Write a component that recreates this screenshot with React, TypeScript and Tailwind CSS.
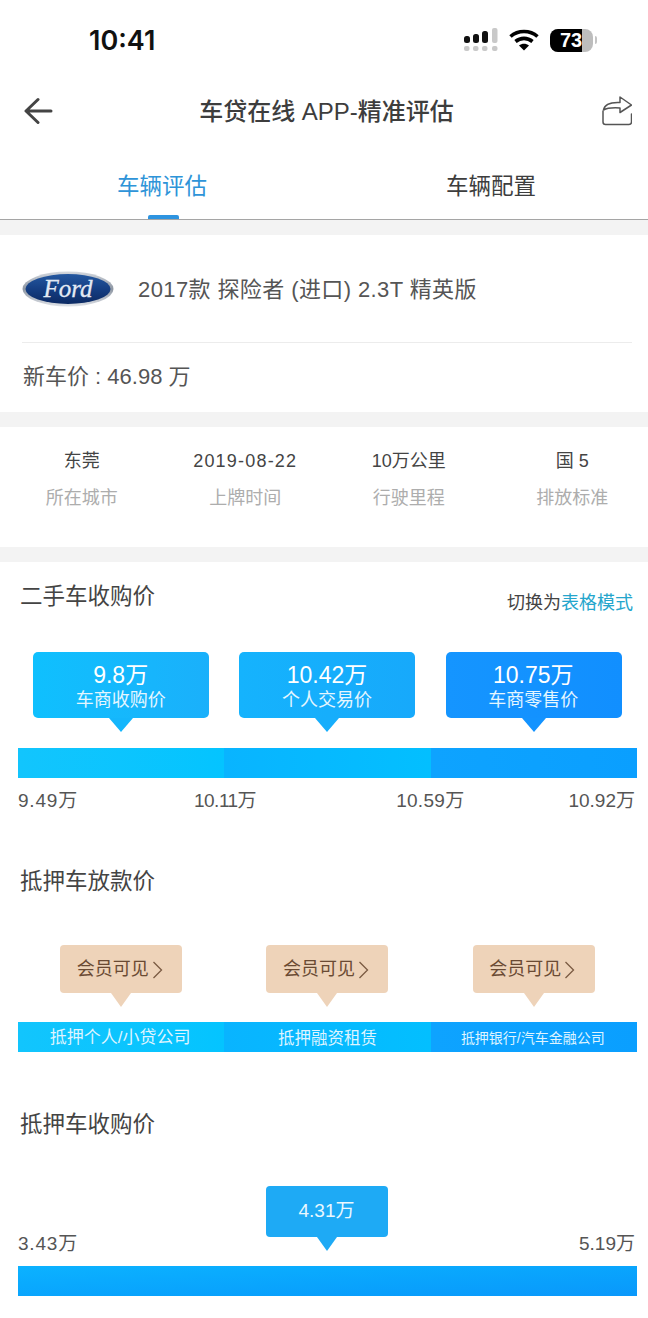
import React from "react";

function Band() {
  return <div className="h-[15px] bg-[#f3f3f3]" />;
}

function Arrow({ cls }: { cls: string }) {
  return <div className={"mx-auto h-0 w-0 border-t-[14px] border-x-transparent " + cls} />;
}

function Stat({ value, label, wide }: { value: string; label: string; wide?: boolean }) {
  return (
    <div className="flex flex-col items-center">
      <div className={"text-[18px] leading-[24px] text-[#444] " + (wide ? "tracking-[1.2px]" : "")}>{value}</div>
      <div className="mt-[13px] text-[18px] leading-[24px] text-[#adadad]">{label}</div>
    </div>
  );
}

function PriceBubble({ value, label, bg, arrow }: { value: string; label: string; bg: string; arrow: string }) {
  return (
    <div>
      <div className={"mx-auto flex h-[66px] w-[176px] flex-col items-center rounded-[5px] pr-[1px] pt-[9px] text-white " + bg}>
        <div className="text-[23px] leading-[28px]">{value}</div>
        <div className="text-[18px] leading-[23px] text-[#e4f6ff]">{label}</div>
      </div>
      <Arrow cls={"border-x-[12px] " + arrow} />
    </div>
  );
}

function MemberBubble() {
  return (
    <div>
      <div className="mx-auto flex h-[48px] w-[122px] items-center justify-center gap-[3px] rounded-[4px] bg-[#eed3b9] pr-[3px] pt-[1px] text-[18px] text-[#6a4a33]">
        <span>会员可见</span>
        <svg width="11" height="18" viewBox="0 0 11 18" fill="none" stroke="#7a5a42" strokeWidth="1.3">
          <path d="M1.5 1 L9.5 9 L1.5 17" />
        </svg>
      </div>
      <Arrow cls="border-x-[10px] border-t-[#eed3b9]" />
    </div>
  );
}

function FordLogo() {
  return (
    <svg width="92" height="36" viewBox="0 0 92 36">
      <defs>
        <linearGradient id="fordRim" x1="0" y1="0" x2="0" y2="1">
          <stop offset="0" stopColor="#d5d9df" />
          <stop offset="0.5" stopColor="#8d96a3" />
          <stop offset="1" stopColor="#dfe2e7" />
        </linearGradient>
        <linearGradient id="fordFill" x1="0" y1="0" x2="0" y2="1">
          <stop offset="0" stopColor="#2458a0" />
          <stop offset="0.55" stopColor="#143c80" />
          <stop offset="1" stopColor="#0c2a63" />
        </linearGradient>
      </defs>
      <ellipse cx="46" cy="18" rx="45.5" ry="17.5" fill="url(#fordRim)" />
      <ellipse cx="46" cy="18" rx="42.5" ry="15" fill="url(#fordFill)" />
      <text
        x="46"
        y="26"
        textAnchor="middle"
        fontFamily="'Liberation Serif', serif"
        fontStyle="italic"
        fontSize="25"
        fill="#e4eaf4"
        stroke="#e4eaf4"
        strokeWidth="0.3"
      >
        Ford
      </text>
    </svg>
  );
}

export default function App() {
  return (
    <div className="h-[1318px] w-[648px] overflow-hidden bg-white font-['Liberation_Sans','Noto_Sans_CJK_SC',sans-serif] text-[#444]">
      {/* status bar */}
      <div className="flex h-[80px] items-center justify-between pl-[89px] pr-[51px]">
        <div className="font-['Inter',sans-serif] text-[27px] font-semibold leading-none text-[#111]">10:41</div>
        <div className="flex items-center gap-[11px]">
          <svg width="34" height="24" viewBox="0 0 34 24">
            <rect x="0" y="8" width="6" height="7" rx="2.5" fill="#111" />
            <rect x="9" y="6" width="6" height="9" rx="2.5" fill="#111" />
            <rect x="18" y="3" width="6" height="12" rx="2.5" fill="#111" />
            <rect x="28" y="0" width="5.5" height="15" rx="2" fill="#c9c9c9" />
            <rect x="0" y="18" width="5.5" height="5" rx="2" fill="#c9c9c9" />
            <rect x="9" y="18" width="5.5" height="5" rx="2" fill="#c9c9c9" />
            <rect x="18" y="18" width="5.5" height="5" rx="2" fill="#c9c9c9" />
            <rect x="28" y="18" width="5.5" height="5" rx="2" fill="#c9c9c9" />
          </svg>
          <svg width="30" height="22" viewBox="0 0 30 22" fill="none">
            <path d="M1.5 7.5 C9 0.8 21 0.8 28.5 7.5" stroke="#000" strokeWidth="3.6" />
            <path d="M6.5 12.5 C11.5 8.3 18.5 8.3 23.5 12.5" stroke="#000" strokeWidth="3.6" />
            <path d="M15 21.5 L10 16.4 C13 14.2 17 14.2 20 16.4 Z" fill="#000" />
          </svg>
          <div className="flex items-center gap-[2px]">
            <div className="relative flex h-[23px] w-[43px] items-center overflow-hidden rounded-[8px] bg-[#bdbdbd]">
              <div className="h-full w-[32px] bg-black" />
              <span className="absolute left-[10px] text-[20px] font-bold leading-none text-white">73</span>
            </div>
            <div className="h-[8px] w-[2px] rounded-r-full bg-[#c4c4c4]" />
          </div>
        </div>
      </div>

      {/* nav */}
      <div className="flex h-[62px] items-center justify-between pl-[24px] pr-[16px]">
        <svg width="29" height="28" viewBox="0 0 29 28" fill="none" stroke="#444" strokeWidth="3" strokeLinecap="round" strokeLinejoin="round">
          <path d="M27 14 H3 M14 2.5 L2 14 L14 25.5" />
        </svg>
        <div className="mr-[2px] pt-[2px] text-[24px] font-medium leading-none text-[#3d3d3d]">车贷在线 APP-精准评估</div>
        <svg width="30" height="30" viewBox="0 0 30 30" fill="none" stroke="#555" strokeWidth="1.5" strokeLinejoin="round" strokeLinecap="round">
          <path d="M1 15 V26 Q1 28.5 3.5 28.5 H27 Q29.5 28.5 29.5 26 V18" />
          <path d="M1.5 14 C2.5 8.5 8 6 18 6.5 V1 L29.5 9 L18 16.5 V12 C10 11.5 5 12 1.5 14 Z" />
        </svg>
      </div>

      {/* tabs */}
      <div className="grid h-[78px] grid-cols-2 border-b border-[#a5a5a5]">
        <div className="relative flex items-center justify-center pt-[12px] text-[22.5px] text-[#2e94d8]">
          车辆评估
          <div className="absolute bottom-0 left-[148px] h-[4px] w-[31px] rounded-t-[2px] bg-[#2e94e0]" />
        </div>
        <div className="flex items-center justify-center pl-[10px] pt-[12px] text-[22.5px] text-[#3d3d3d]">车辆配置</div>
      </div>
      <Band />

      {/* car card */}
      <div className="h-[177px] pl-[22px] pr-[16px]">
        <div className="flex h-[108px] items-center border-b border-[#ececec]">
          <FordLogo />
          <div className="ml-[24px] pt-[2px] text-[22px] leading-none tracking-[0.4px] text-[#555]">2017款 探险者 (进口) 2.3T 精英版</div>
        </div>
        <div className="pl-[1px] pt-[19px] text-[22px] leading-[30px] text-[#555]">新车价 : 46.98 万</div>
      </div>
      <Band />

      {/* stats */}
      <div className="grid h-[120px] grid-cols-[repeat(4,163.5px)] pt-[22px]">
        <Stat value="东莞" label="所在城市" />
        <Stat value="2019-08-22" label="上牌时间" wide />
        <Stat value="10万公里" label="行驶里程" />
        <Stat value="国 5" label="排放标准" />
      </div>
      <Band />

      {/* used car price */}
      <div className="flex h-[90px] items-start justify-between pl-[20px] pr-[15px] pt-[20px]">
        <div className="text-[22.5px] leading-[30px] text-[#444]">二手车收购价</div>
        <div className="pt-[9px] text-[18px] leading-[24px] text-[#444]">
          切换为<span className="text-[#24a5cc]">表格模式</span>
        </div>
      </div>
      <div className="pl-[18px] pr-[11px]">
        <div className="grid grid-cols-3">
          <PriceBubble value="9.8万" label="车商收购价" bg="bg-gradient-to-r from-[#0fc0fe] to-[#1ab0fb]" arrow="border-t-[#14b6fc]" />
          <PriceBubble value="10.42万" label="个人交易价" bg="bg-gradient-to-r from-[#15b3fd] to-[#17a9fb]" arrow="border-t-[#16aefc]" />
          <PriceBubble value="10.75万" label="车商零售价" bg="bg-gradient-to-r from-[#1595ff] to-[#118fff]" arrow="border-t-[#1393ff]" />
        </div>
        <div className="mt-[16px] grid h-[30px] grid-cols-3">
          <div className="bg-gradient-to-r from-[#12c5fd] to-[#04c4ff]" />
          <div className="bg-gradient-to-r from-[#09b4ff] to-[#03bfff]" />
          <div className="bg-gradient-to-r from-[#0ea3ff] to-[#0a9fff]" />
        </div>
        <div className="mt-[10px] flex pr-[2px] text-[19px] leading-[26px] text-[#555]">
          <span className="tracking-[0.8px]">9.49万</span>
          <span className="ml-[116px] tracking-[-0.5px]">10.11万</span>
          <span className="ml-[140px] tracking-[0.3px]">10.59万</span>
          <span className="ml-auto">10.92万</span>
        </div>
      </div>

      {/* loan price */}
      <div className="pl-[20px] pt-[53px] text-[22.5px] leading-[30px] text-[#444]">抵押车放款价</div>
      <div className="mt-[48px] pl-[18px] pr-[11px]">
        <div className="grid grid-cols-3">
          <MemberBubble />
          <MemberBubble />
          <MemberBubble />
        </div>
        <div className="mt-[15px] grid h-[30px] grid-cols-3 text-[#dff4ff]">
          <div className="flex items-center justify-center bg-gradient-to-r from-[#12c5fd] to-[#04c4ff] pr-[2px] pt-[2px] text-[17px]">抵押个人/小贷公司</div>
          <div className="flex items-center justify-center bg-gradient-to-r from-[#09b4ff] to-[#03bfff] pt-[2px] text-[16.5px]">抵押融资租赁</div>
          <div className="flex items-center justify-center bg-gradient-to-r from-[#0ea3ff] to-[#0a9fff] pr-[2px] pt-[2px] text-[14px]">抵押银行/汽车金融公司</div>
        </div>
      </div>

      {/* mortgage purchase price */}
      <div className="pl-[20px] pt-[58px] text-[22.5px] leading-[30px] text-[#444]">抵押车收购价</div>
      <div className="mt-[46px] pl-[18px] pr-[11px]">
        <div className="flex items-start justify-between pr-[2px]">
          <div className="mt-[45px] text-[19px] leading-[26px] tracking-[0.8px] text-[#555]">3.43万</div>
          <div className="mr-[4px]">
            <div className="flex h-[51px] w-[122px] items-center justify-center rounded-[4px] bg-[#1eaaf5] text-[19px] text-[#eaf8ff]">4.31万</div>
            <Arrow cls="border-x-[10px] border-t-[#1eaaf5]" />
          </div>
          <div className="mt-[45px] text-[19px] leading-[26px] text-[#555]">5.19万</div>
        </div>
        <div className="mt-[9px] h-[30px] bg-gradient-to-br from-[#0cb2ff] to-[#0a98fb]" />
      </div>
    </div>
  );
}
